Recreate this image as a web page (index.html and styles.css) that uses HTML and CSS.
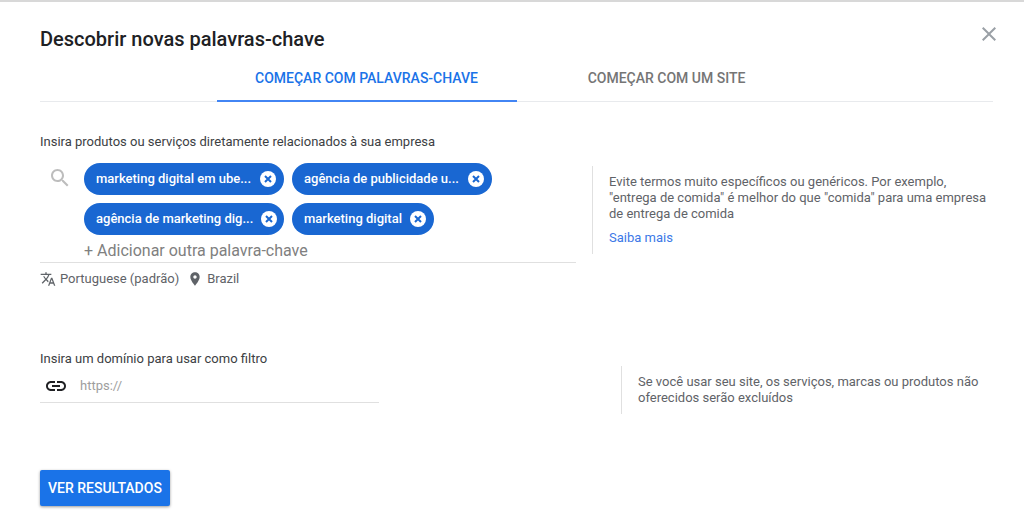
FILE: index.html
```html
<!DOCTYPE html>
<html lang="pt-BR">
<head>
  <meta charset="UTF-8">
  <meta name="viewport" content="width=device-width, initial-scale=1">
  <title>Descobrir novas palavras-chave</title>
  <link rel="stylesheet" href="styles.css">
</head>
<body>
  <main class="panel">
    <header class="panel-header">
      <h1>Descobrir novas palavras-chave</h1>
      <button type="button" class="close" aria-label="Fechar">
        <svg viewBox="0 0 24 24"><path d="M19 6.41L17.59 5 12 10.59 6.41 5 5 6.41 10.59 12 5 17.59 6.41 19 12 13.41 17.59 19 19 17.59 13.41 12z"/></svg>
      </button>
    </header>

    <div class="tabs" role="tablist">
      <button type="button" class="tab active" role="tab" aria-selected="true">COMEÇAR COM PALAVRAS-CHAVE</button>
      <button type="button" class="tab" role="tab" aria-selected="false">COMEÇAR COM UM SITE</button>
    </div>

    <form>
      <section class="keywords">
        <div class="field">
          <label class="label" for="keyword">Insira produtos ou serviços diretamente relacionados à sua empresa</label>
          <div class="keyword-box">
            <svg class="search-icon" viewBox="0 0 24 24"><path d="M15.5 14h-.79l-.28-.27C15.41 12.59 16 11.11 16 9.5 16 5.91 13.09 3 9.5 3S3 5.91 3 9.5 5.91 16 9.5 16c1.61 0 3.09-.59 4.23-1.57l.27.28v.79l5 4.99L20.49 19l-4.99-5zm-6 0C7.01 14 5 11.99 5 9.5S7.01 5 9.5 5 14 7.01 14 9.5 11.99 14 9.5 14z"/></svg>
            <div class="keyword-entry">
              <div class="chips">
                <div class="chip long">
                  <span>marketing digital em ube...</span>
                  <button type="button" class="remove" aria-label="Remover"><svg viewBox="0 0 16 16"><path d="M5 5l6 6M11 5l-6 6"/></svg></button>
                </div>
                <div class="chip long">
                  <span>agência de publicidade u...</span>
                  <button type="button" class="remove" aria-label="Remover"><svg viewBox="0 0 16 16"><path d="M5 5l6 6M11 5l-6 6"/></svg></button>
                </div>
                <div class="chip long">
                  <span>agência de marketing dig...</span>
                  <button type="button" class="remove" aria-label="Remover"><svg viewBox="0 0 16 16"><path d="M5 5l6 6M11 5l-6 6"/></svg></button>
                </div>
                <div class="chip">
                  <span>marketing digital</span>
                  <button type="button" class="remove" aria-label="Remover"><svg viewBox="0 0 16 16"><path d="M5 5l6 6M11 5l-6 6"/></svg></button>
                </div>
              </div>
              <input type="text" id="keyword" class="keyword-input" placeholder="+ Adicionar outra palavra-chave">
            </div>
          </div>
          <div class="targeting">
            <button type="button" class="target">
              <svg viewBox="0 0 24 24"><path d="M12.87 15.07l-2.54-2.51.03-.03c1.74-1.94 2.98-4.17 3.71-6.53H17V4h-7V2H8v2H1v1.99h11.17C11.5 7.92 10.44 9.75 9 11.35 8.07 10.32 7.3 9.19 6.69 8h-2c.73 1.63 1.73 3.17 2.98 4.56l-5.09 5.02L4 19l5-5 3.11 3.11.76-2.04zM18.5 10h-2L12 22h2l1.12-3h4.75L21 22h2l-4.5-12zm-2.62 7l1.62-4.33L19.12 17h-3.24z"/></svg>
              Portuguese (padrão)
            </button>
            <button type="button" class="target">
              <svg viewBox="0 0 24 24"><path d="M12 2C8.13 2 5 5.13 5 9c0 5.25 7 13 7 13s7-7.75 7-13c0-3.87-3.13-7-7-7zm0 9.5c-1.38 0-2.5-1.12-2.5-2.5s1.12-2.5 2.5-2.5 2.5 1.12 2.5 2.5-1.12 2.5-2.5 2.5z"/></svg>
              Brazil
            </button>
          </div>
        </div>
        <aside class="tip">
          <p>Evite termos muito específicos ou genéricos. Por exemplo, "entrega de comida" é melhor do que "comida" para uma empresa de entrega de comida</p>
          <a href="#">Saiba mais</a>
        </aside>
      </section>

      <section class="domain">
        <div class="field">
          <label class="label" for="domain">Insira um domínio para usar como filtro</label>
          <div class="domain-box">
            <svg class="link-icon" viewBox="0 0 24 24"><path d="M3.9 12c0-1.71 1.39-3.1 3.1-3.1h4V7H7c-2.76 0-5 2.24-5 5s2.24 5 5 5h4v-1.9H7c-1.71 0-3.1-1.39-3.1-3.1zM8 13h8v-2H8v2zm9-6h-4v1.9h4c1.71 0 3.1 1.39 3.1 3.1s-1.39 3.1-3.1 3.1h-4V17h4c2.76 0 5-2.24 5-5s-2.24-5-5-5z"/></svg>
            <input type="text" id="domain" class="domain-input" placeholder="https://">
          </div>
        </div>
        <aside class="tip">
          <p>Se você usar seu site, os serviços, marcas ou produtos não oferecidos serão excluídos</p>
        </aside>
      </section>

      <button type="submit" class="submit">VER RESULTADOS</button>
    </form>
  </main>
</body>
</html>
```

FILE: styles.css
```css
* {
  box-sizing: border-box;
}

body {
  margin: 0;
  background: #fff;
  color: #3c4043;
  font-family: Roboto, "Liberation Sans", sans-serif;
  font-size: 13px;
  line-height: 16px;
}

h1, p {
  margin: 0;
}

button, input {
  border: 0;
  padding: 0;
  background: none;
  color: inherit;
  font: inherit;
}

button {
  cursor: pointer;
}

input {
  outline: none;
}

svg {
  display: block;
  flex: none;
  fill: currentColor;
}

.panel {
  border-top: 2px solid #d8d8d8;
  padding: 20px 31px 10px 40px;
}

/* header */
.panel-header {
  display: flex;
  align-items: flex-start;
  justify-content: space-between;
  height: 32px;
}

h1 {
  color: #202124;
  font-size: 20px;
  font-weight: 500;
  line-height: 34px;
}

.close {
  margin-right: -8px;
  color: #9aa0a6;
}

.close svg {
  width: 24px;
  height: 24px;
}

/* tabs */
.tabs {
  display: flex;
  justify-content: center;
  border-bottom: 1px solid #e8eaed;
}

.tab {
  width: 300px;
  height: 48px;
  margin-bottom: -1px;
  border-bottom: 2px solid transparent;
  padding-top: 2px;
  color: #757575;
  font-size: 14px;
  font-weight: 500;
}

.tab.active {
  border-bottom-color: #4285f4;
  color: #1a73e8;
}

/* fields */
.label {
  display: block;
}

.keywords {
  display: grid;
  grid-template-columns: 1fr 401px;
  gap: 16px;
  align-items: start;
  margin-top: 32px;
}

.keyword-box {
  display: flex;
  gap: 12px;
  margin-top: 13px;
  border-bottom: 1px solid #e0e0e0;
  padding-left: 8px;
}

.search-icon {
  width: 24px;
  height: 24px;
  margin-top: 3px;
  color: #bdbdbd;
}

.keyword-entry {
  flex: 1;
}

.chips {
  display: flex;
  flex-wrap: wrap;
  gap: 8px;
}

.chip {
  display: flex;
  align-items: center;
  gap: 8px;
  height: 32px;
  border-radius: 16px;
  padding: 0 8px 0 12px;
  background: #1967d2;
  color: #fff;
  font-weight: 500;
  white-space: nowrap;
}

.chip.long {
  justify-content: space-between;
  width: 200px;
}

.remove {
  flex: none;
  width: 16px;
  height: 16px;
  border-radius: 50%;
  background: #fff;
  color: #1967d2;
}

.remove svg {
  fill: none;
  stroke: currentColor;
  stroke-width: 2;
}

.keyword-input {
  display: block;
  width: 100%;
  height: 27px;
  padding-top: 4px;
  font-size: 16px;
}

.keyword-input::placeholder {
  color: #808080;
  opacity: 1;
}

.targeting {
  display: flex;
  gap: 8px;
  margin-top: 8px;
  color: #5f6368;
}

.target {
  display: flex;
  align-items: center;
  gap: 4px;
}

.target svg {
  width: 16px;
  height: 16px;
}

.tip {
  border-left: 1px solid #e0e0e0;
  padding: 8px 0 8px 16px;
  color: #5f6368;
}

.tip a {
  display: block;
  margin-top: 8px;
  color: #3b78e7;
  text-decoration: none;
}

.keywords .tip {
  margin-top: 32px;
}

.domain {
  display: grid;
  grid-template-columns: 339px 372px;
  justify-content: space-between;
  align-items: start;
  margin-top: 64px;
}

.domain-box {
  display: flex;
  align-items: center;
  gap: 12px;
  border-bottom: 1px solid #e0e0e0;
  padding: 7px 0 4px 4px;
}

.link-icon {
  width: 24px;
  height: 24px;
  color: #202124;
}

.domain-input {
  flex: 1;
  min-width: 0;
}

.domain-input::placeholder {
  color: #9e9e9e;
  opacity: 1;
}

.domain .tip {
  margin-top: 15px;
}

.submit {
  height: 36px;
  margin-top: 56px;
  border-radius: 2px;
  padding: 0 8px;
  background: #1a73e8;
  box-shadow: 0 1px 3px rgba(0, 0, 0, 0.4);
  color: #fff;
  font-size: 14px;
  font-weight: 500;
}
```
